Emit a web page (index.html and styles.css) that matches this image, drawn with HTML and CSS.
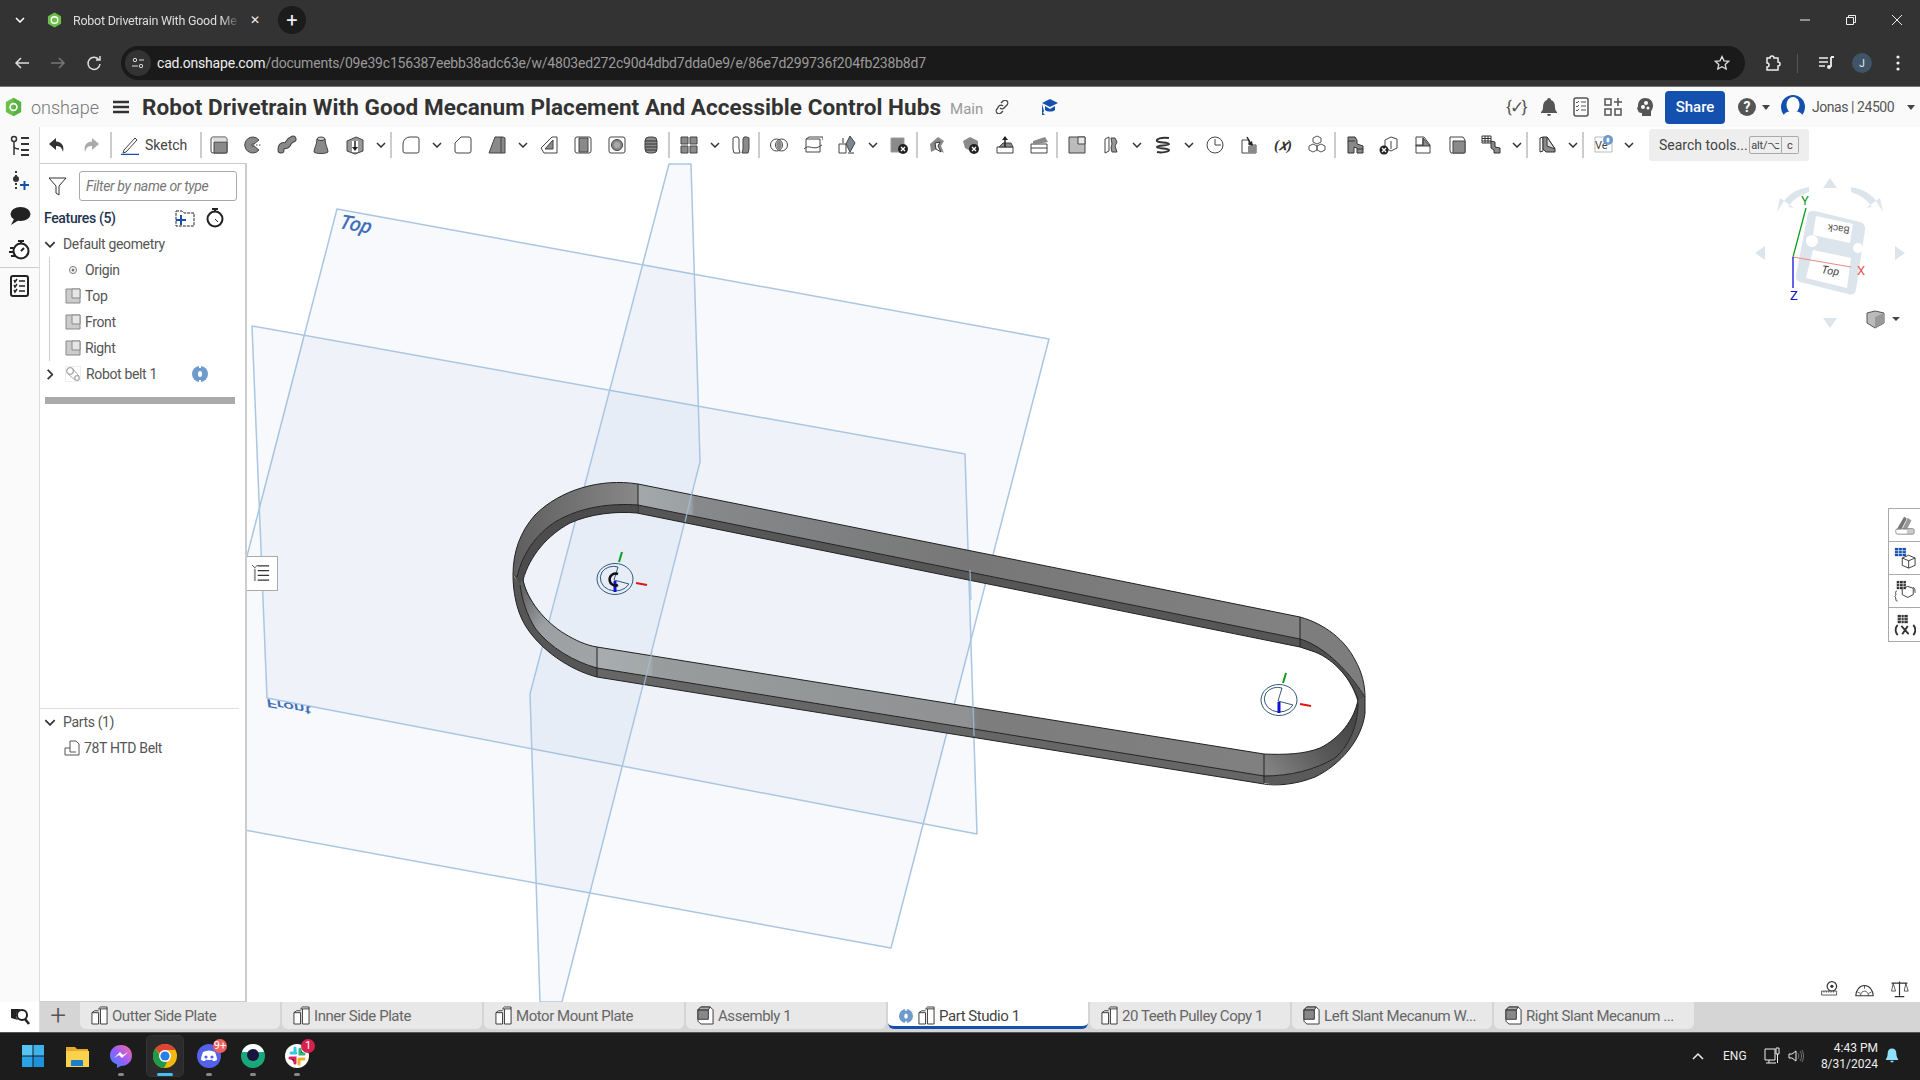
FILE: index.html
```html
<!DOCTYPE html>
<html lang="en">
<head>
<meta charset="utf-8">
<title>Robot Drivetrain With Good Mecanum Placement And Accessible Control Hubs</title>
<link rel="stylesheet" href="styles.css">
</head>
<body>
<svg class="sprite" aria-hidden="true">
  <defs>
    <linearGradient id="bandU" x1="638" x2="1300" y1="0" y2="0" gradientUnits="userSpaceOnUse">
      <stop offset="0" stop-color="#a2a7aa"/><stop offset=".08" stop-color="#9da1a4"/><stop offset=".085" stop-color="#87898b"/><stop offset=".5" stop-color="#777"/><stop offset="1" stop-color="#828282"/>
    </linearGradient>
    <linearGradient id="bandL" x1="597" x2="1264" y1="0" y2="0" gradientUnits="userSpaceOnUse">
      <stop offset="0" stop-color="#a7acae"/><stop offset=".08" stop-color="#a3a8a9"/><stop offset=".085" stop-color="#999c9d"/><stop offset=".56" stop-color="#8f9192"/><stop offset=".57" stop-color="#7d7d7d"/><stop offset="1" stop-color="#808080"/>
    </linearGradient>
    <linearGradient id="arcA" x1="513" x2="638" y1="0" y2="0" gradientUnits="userSpaceOnUse">
      <stop offset="0" stop-color="#5e5e5e"/><stop offset="1" stop-color="#888"/>
    </linearGradient>
    <linearGradient id="arcC" x1="520" x2="597" y1="590" y2="650" gradientUnits="userSpaceOnUse">
      <stop offset="0" stop-color="#5f5f5f"/><stop offset=".4" stop-color="#9c9fa1"/><stop offset="1" stop-color="#a0a4a6"/>
    </linearGradient>
    <linearGradient id="arcF" x1="1358" x2="1264" y1="700" y2="770" gradientUnits="userSpaceOnUse">
      <stop offset="0" stop-color="#3f3f3f"/><stop offset=".5" stop-color="#585858"/><stop offset="1" stop-color="#848484"/>
    </linearGradient>
    <linearGradient id="msgr" x1="0" x2="1" y1="1" y2="0">
      <stop offset="0" stop-color="#2f8cff"/><stop offset=".5" stop-color="#9a5cff"/><stop offset="1" stop-color="#ff6c8e"/>
    </linearGradient>
    <symbol id="i-undo" viewBox="0 0 20 20"><path fill="#333" d="M9 3 2 9l7 6v-4c4-.5 6 1.500 7 6 1.500-6-1-10-7-10.500z"/></symbol>
    <symbol id="i-redo" viewBox="0 0 20 20"><path fill="#aaa" d="m11 3 7 6-7 6v-4c-4-.5-6 1.500-7 6-1.500-6 1-10 7-10.500z"/></symbol>
    <symbol id="i-pencil" viewBox="0 0 20 20"><path fill="none" stroke="#444" d="M4 15 15 3l2 2L6 17l-3 1z"/><path stroke="#1450ad" stroke-width="1.500" d="M1 19.500h18"/></symbol>
    <symbol id="i-extrude" viewBox="0 0 20 20"><rect x="2" y="2" width="16" height="16" rx="2" fill="#fff" stroke="#444"/><path fill="#8a8a8a" stroke="#444" d="M5 7h13v11H5z"/><path fill="#bbb" d="M5 7l-3-5h16v5z" opacity=".5"/></symbol>
    <symbol id="i-revolve" viewBox="0 0 20 20"><path fill="#8a8a8a" stroke="#444" d="M16 5A8 8 0 1 0 16 15L11 11H9V9h2z"/><path stroke="#444" stroke-dasharray="1.500 1.500" d="M10 10h9"/></symbol>
    <symbol id="i-sweep" viewBox="0 0 20 20"><path fill="none" stroke="#444" stroke-width="7" stroke-linecap="round" d="M4 15c0-7 4-3 6-5s1-4 6-6"/><path fill="none" stroke="#8a8a8a" stroke-width="5" stroke-linecap="round" d="M4 15c0-7 4-3 6-5s1-4 6-6"/></symbol>
    <symbol id="i-loft" viewBox="0 0 20 20"><ellipse cx="10" cy="4" rx="4" ry="2" fill="#ccc" stroke="#444"/><path fill="#8a8a8a" stroke="#444" d="M6 4c0 6-3 9-3 13 2 2 12 2 14 0 0-4-3-7-3-13-2 2-6 2-8 0z"/></symbol>
    <symbol id="i-thicken" viewBox="0 0 20 20"><path fill="#999" stroke="#444" d="M2 6 11 2l7 3v11l-8 3-8-3z"/><path fill="#fff" d="M7 6h6v11H7z"/><path stroke="#222" stroke-width="1.500" d="M10 6v7"/><path fill="#222" d="m7 12 3 4 3-4z"/></symbol>
    <symbol id="i-fillet" viewBox="0 0 20 20"><path fill="#fff" stroke="#444" d="M9 2h7a2 2 0 0 1 2 2v12a2 2 0 0 1-2 2H4a2 2 0 0 1-2-2V9a7 7 0 0 1 7-7z"/></symbol>
    <symbol id="i-chamfer" viewBox="0 0 20 20"><path fill="#fff" stroke="#444" d="M8 2h8a2 2 0 0 1 2 2v12a2 2 0 0 1-2 2H4a2 2 0 0 1-2-2V8z"/></symbol>
    <symbol id="i-draft" viewBox="0 0 20 20"><path fill="#8a8a8a" stroke="#444" d="M8 2h8l2 1v15H2z"/><path stroke="#444" d="M14 2v16"/></symbol>
    <symbol id="i-rib" viewBox="0 0 20 20"><path fill="#fff" stroke="#444" d="M2 13 13 2h5v16H5z"/><path fill="#8a8a8a" stroke="#444" d="M6 14 14 5v9z"/></symbol>
    <symbol id="i-shell" viewBox="0 0 20 20"><rect x="2" y="2" width="16" height="16" rx="2" fill="#fff" stroke="#444"/><path fill="#8a8a8a" stroke="#444" d="M6 3h9v14H6z"/></symbol>
    <symbol id="i-hole" viewBox="0 0 20 20"><rect x="2" y="2" width="16" height="16" rx="2" fill="#fff" stroke="#444"/><circle cx="10" cy="10" r="5.500" fill="#8a8a8a" stroke="#444"/><circle cx="10" cy="10" r="3" fill="#aaa"/></symbol>
    <symbol id="i-thread" viewBox="0 0 20 20"><rect x="4" y="2" width="12" height="16" rx="4" fill="#8a8a8a" stroke="#444"/><path stroke="#333" d="M4 6h12M4 9h12M4 12h12M4 15h12"/></symbol>
    <symbol id="i-pattern" viewBox="0 0 20 20"><path fill="#8a8a8a" stroke="#444" d="M2 2h7v7H2zM11 2h7v7h-7zM2 11h7v7H2zM11 11h7v7h-7z"/></symbol>
    <symbol id="i-mirror" viewBox="0 0 20 20"><path fill="#fff" stroke="#444" d="M2 3l2-1h3l1 2v10l1 4H3l-1-4z"/><path fill="#8a8a8a" stroke="#444" d="m18 3-2-1h-3l-1 2v10l-1 4h6l1-4z"/></symbol>
    <symbol id="i-bool" viewBox="0 0 20 20"><circle cx="7.500" cy="10" r="6" fill="#fff" stroke="#444"/><circle cx="12.500" cy="10" r="6" fill="none" stroke="#444"/><path fill="#8a8a8a" d="M10 5a6 6 0 0 1 0 10 6 6 0 0 1 0-10z"/></symbol>
    <symbol id="i-split" viewBox="0 0 20 20"><path fill="#fff" stroke="#444" d="M3 4h14v13H3z"/><path fill="none" stroke="#444" d="M3 4l3-2h14v3M1 14c5-6 9 3 18-4"/></symbol>
    <symbol id="i-transform" viewBox="0 0 20 20"><path fill="#fff" stroke="#444" d="M2 9h7v9H2z"/><path fill="#7a8894" stroke="#444" d="m13 1 5 7-5 9-4-8z"/><path stroke="#333" d="M6 8V3m11 15h-6"/></symbol>
    <symbol id="i-del" viewBox="0 0 20 20"><path fill="#8a8a8a" stroke="#999" d="M2 3h13v14H2z"/><circle cx="14" cy="14" r="5" fill="#222"/><path stroke="#fff" stroke-width="1.300" d="m12 12 4 4m0-4-4 4"/></symbol>
    <symbol id="i-surf" viewBox="0 0 20 20"><path fill="#8a8a8a" d="M3 9 11 2l6 4-3 5 3 7-7-4-6 3z"/><path fill="#fff" stroke="#333" d="m8 8 5-1-2 4 3 6-5-3z"/></symbol>
    <symbol id="i-delsurf" viewBox="0 0 20 20"><path fill="#8a8a8a" d="M2 6 9 2l8 4v7l-6 4-7-4z"/><circle cx="13" cy="14" r="5" fill="#222"/><path stroke="#fff" stroke-width="1.300" d="m11 12 4 4m0-4-4 4"/></symbol>
    <symbol id="i-up" viewBox="0 0 20 20"><path fill="#fff" stroke="#444" d="M2 12h16v6H2z"/><path fill="#8a8a8a" stroke="#444" d="M4 12 8 8h8l2 4z"/><path stroke="#222" stroke-width="1.500" d="M10 12V4"/><path fill="#222" d="M7 5l3-4 3 4z"/></symbol>
    <symbol id="i-boxsurf" viewBox="0 0 20 20"><path fill="#fff" stroke="#444" d="M2 9h16v9H2z"/><path fill="#8a8a8a" d="M4 6 16 2l3 5-15 3z"/><path stroke="#444" d="M2 13h16"/></symbol>
    <symbol id="i-plane" viewBox="0 0 20 20"><path fill="#bbb" stroke="#444" d="M2 2h16v16H2z"/><path fill="#e8e8e8" stroke="#444" d="M11 2h7v7h-7z"/></symbol>
    <symbol id="i-wrap" viewBox="0 0 20 20"><path fill="#fff" stroke="#444" d="M4 4 8 2v14l-4 2z"/><path fill="#999" stroke="#444" d="M10 3h4l2 4-2 4 2 6h-5l-1-4 1-4z"/></symbol>
    <symbol id="i-helix" viewBox="0 0 20 20"><path fill="none" stroke="#333" stroke-width="2" d="M16 3C8 2 3 4 4 6c1 2 12 1 12 3s-12 1-12 3 12 1 12 3-8 3-12 2"/></symbol>
    <symbol id="i-clockf" viewBox="0 0 20 20"><circle cx="10" cy="10" r="8" fill="#fff" stroke="#444"/><path fill="none" stroke="#444" d="M10 4v6h6"/></symbol>
    <symbol id="i-insert" viewBox="0 0 20 20"><path fill="#fff" stroke="#444" d="M3 5h7v5h7v8H3z"/><path fill="#8a8a8a" d="M9 11h8v7H9z"/><path stroke="#222" stroke-width="1.500" d="M8 2l4 7"/><path fill="#222" d="m9 9 5 2-1-5z"/></symbol>
    <symbol id="i-cubes" viewBox="0 0 20 20"><path fill="#fff" stroke="#555" d="m10 1 4 2v4l-4 2-4-2V3zM6 9l4 2v4l-4 2-4-2v-4zM14 9l4 2v4l-4 2-4-2v-4z"/></symbol>
    <symbol id="i-sheet" viewBox="0 0 20 20"><path fill="#8a8a8a" stroke="#333" d="M3 2h7l2 3v4l6 2v7h-6v-5l-3-1v6H3z"/><path stroke="#333" d="M3 6h7M12 14h6"/></symbol>
    <symbol id="i-delcube" viewBox="0 0 20 20"><path fill="#fff" stroke="#444" d="m6 5 6-3 6 2v9l-6 3-6-3z"/><path fill="#ddd" stroke="#444" d="M12 6v8"/><circle cx="5" cy="15" r="4.500" fill="#222"/><path stroke="#fff" stroke-width="1.200" d="m3 13 4 4m0-4-4 4"/></symbol>
    <symbol id="i-flat" viewBox="0 0 20 20"><path fill="#fff" stroke="#444" d="M3 2h8l6 8v8H3z"/><path fill="#8a8a8a" stroke="#444" d="M10 3v8H3v-1h6M10 11h7l-7-8z"/></symbol>
    <symbol id="i-box" viewBox="0 0 20 20"><path fill="#fff" stroke="#444" d="M3 2h13l2 3v12l-1 1H4l-1-2z"/><path fill="#8a8a8a" stroke="#444" d="M6 6h12v12H6z"/></symbol>
    <symbol id="i-table" viewBox="0 0 20 20"><path fill="#fff" stroke="#333" d="M1 1h9v7H1zM1 3.500h9M1 6h9M4 1v7M7 1v7"/><path fill="#8a8a8a" stroke="#333" d="M10 6l4 1v5l5 1v5h-6v-3l-3-2z"/></symbol>
    <symbol id="i-walls" viewBox="0 0 20 20"><path fill="#fff" stroke="#333" d="M3 3l3-1v14l-3 1z"/><path fill="#8a8a8a" stroke="#333" d="M6 2h4l8 12v3H9L6 14z"/><path fill="#ddd" stroke="#333" d="M10 2v9l8 3z"/></symbol>
    <symbol id="i-twin" viewBox="0 0 18 20"><path fill="#fff" stroke="#333" d="M1 7h7v12H1zM1 7l3-2h4M8 3l2-2h7v18h-7V3zM10 3h7"/></symbol>
    <symbol id="i-asm" viewBox="0 0 18 20"><path fill="#fff" stroke="#333" d="M1 4l3-3h10l3 3v15H4l-3-3z"/><path fill="#888" stroke="#333" d="M1 4h11v10H1z"/><path fill="#aaa" stroke="#333" d="M1 4l3-3h10l-2 3z"/></symbol>
    <symbol id="i-tree" viewBox="0 0 22 22"><circle cx="5" cy="4" r="2.500" fill="none" stroke="#333" stroke-width="1.500"/><path fill="none" stroke="#333" stroke-width="1.500" d="M5 7v13M5 11c0 2 3 3 5 3"/><path stroke="#333" stroke-width="2" d="M12 3h8M12 9h8M12 15h8M12 20h8"/></symbol>
    <symbol id="i-addpt" viewBox="0 0 22 22"><path stroke="#333" stroke-width="2" stroke-dasharray="2 2" d="M7 1v20"/><circle cx="7" cy="9" r="3" fill="#333"/><path stroke="#1450ad" stroke-width="2" d="M11 15h9M15.500 11v9"/></symbol>
    <symbol id="i-comment" viewBox="0 0 22 22"><ellipse cx="11.500" cy="9" rx="10" ry="7" fill="#222"/><path fill="#222" d="M5 14 2 20l8-5z"/></symbol>
    <symbol id="i-perf" viewBox="0 0 22 22"><circle cx="12" cy="12" r="7.500" fill="#fff" stroke="#222" stroke-width="2"/><path stroke="#222" stroke-width="2" d="M9 2h6M12 2v3M12 12l3-3M1 9h5M0 13h5M2 17h5"/></symbol>
    <symbol id="i-list" viewBox="0 0 22 22"><rect x="2" y="1" width="17" height="20" rx="2" fill="none" stroke="#222" stroke-width="2"/><path stroke="#222" stroke-width="1.500" d="M10 6h6M10 11h6M10 16h6M5 5l1 2 2-3M5 10l1 2 2-3M5 15l1 2 2-3" fill="none"/></symbol>
    <symbol id="i-funnel" viewBox="0 0 20 20"><path fill="none" stroke="#333" d="M1 2h17l-7 8v9l-3-2v-7z"/></symbol>
    <symbol id="i-folder" viewBox="0 0 20 20"><path fill="none" stroke="#222" stroke-dasharray="3 1" d="M1 3h6l2 2h10v13H1z"/><path stroke="#1450ad" stroke-width="2" d="M1 12h10M6 7v10"/></symbol>
    <symbol id="i-timer" viewBox="0 0 20 20"><circle cx="10" cy="11" r="7.500" fill="none" stroke="#222" stroke-width="2"/><path stroke="#222" stroke-width="2" d="M7 1h6M10 1v3"/><path stroke="#222" d="m10 11 3 3"/></symbol>
    <symbol id="i-origin" viewBox="0 0 10 10"><circle cx="5" cy="5" r="3.500" fill="none" stroke="#777"/><circle cx="5" cy="5" r="1.500" fill="#777"/></symbol>
    <symbol id="i-pl" viewBox="0 0 16 16"><path fill="#ccc" stroke="#888" d="M1 1h14v14H1z"/><path fill="#e6e6e6" stroke="#888" d="M7 1h8v9H7z"/></symbol>
    <symbol id="i-belt" viewBox="0 0 16 16"><rect x=".5" y=".5" width="15" height="15" fill="#fff" stroke="#eee"/><circle cx="5" cy="5" r="3.300" fill="none" stroke="#aaa" stroke-width="1.300"/><circle cx="12" cy="12" r="2.300" fill="none" stroke="#aaa" stroke-width="1.300"/><path stroke="#aaa" d="m8 3 6 7M3 8l7 6"/></symbol>
    <symbol id="i-info" viewBox="0 0 16 16"><circle cx="8" cy="8" r="8" fill="#6f9bcc"/><ellipse cx="8" cy="8" rx="2" ry="3" fill="#fff"/><path stroke="#fff" stroke-width="2" d="M8 0v2m0 12v2"/></symbol>
    <symbol id="i-part" viewBox="0 0 16 16"><path fill="none" stroke="#555" d="M1 15V8h5V1h6l3 3v11zM6 8v4h6"/></symbol>
    <symbol id="i-chev" viewBox="0 0 10 6"><path fill="none" stroke="#333" stroke-width="1.500" d="m1 1 4 4 4-4"/></symbol>
    <symbol id="i-caret" viewBox="0 0 10 6"><path fill="#444" d="M0 0h10L5 6z"/></symbol>
    <symbol id="i-bell" viewBox="0 0 20 20"><path fill="#555" d="M10 1a2 2 0 0 1 2 2c3 1 4 4 4 7 0 3 1 4 2 5v1H2v-1c1-1 2-2 2-5 0-3 1-6 4-7a2 2 0 0 1 2-2zM8 17h4a2 2 0 0 1-4 0z"/></symbol>
    <symbol id="i-check" viewBox="0 0 20 20"><rect x="3" y="1" width="14" height="18" rx="2" fill="none" stroke="#555" stroke-width="1.500"/><path fill="none" stroke="#555" d="M10 5h5M10 9h5M10 13h5M5 5l1 1 2-2M5 9l1 1 2-2M5 13l1 1 2-2"/></symbol>
    <symbol id="i-apps" viewBox="0 0 20 20"><path fill="none" stroke="#555" stroke-width="1.500" d="M2 2h6v6H2zM2 12h6v6H2zM12 12h6v6h-6zM15 1v8M11 5h8"/></symbol>
    <symbol id="i-head" viewBox="0 0 20 20"><path fill="#555" d="M10 1c5 0 8 3 8 8 0 3-2 4-2 6v4H7v-3c-3 0-4-1-4-3l-1-1 1-3c0-5 3-8 7-8z"/><circle cx="11" cy="6" r="2" fill="#fff"/><circle cx="8" cy="10" r="2" fill="#fff"/><circle cx="13" cy="11" r="1.500" fill="#fff"/></symbol>
    <symbol id="i-link" viewBox="0 0 14 14"><path fill="none" stroke="#444" stroke-width="1.300" d="M6 3l2-2c1-1 3-1 4 0s1 3 0 4L9 8C8 9 6 9 5 8M8 6C7 5 5 5 4 6L2 9c-1 1-1 3 0 4s3 1 4 0l2-2"/></symbol>
    <symbol id="i-cap" viewBox="0 0 18 18"><path fill="#1450ad" d="M9 1 1 5l8 4 8-4zM4 8v4c2 2 8 2 10 0V8l-5 3zM1 6v11h3l-2-2 1-2z"/></symbol>
    <symbol id="i-user" viewBox="0 0 24 24"><circle cx="12" cy="12" r="12" fill="#1450ad"/><ellipse cx="12" cy="10" rx="6.500" ry="8" fill="#fff"/><path fill="#fff" d="M2 24c0-6 4-8 10-8s10 2 10 8z"/></symbol>
    <symbol id="i-eye" viewBox="0 0 20 20"><path fill="#222" d="M1 2h10l-3 2a6 6 0 0 0 0 9L1 11z"/><circle cx="12" cy="8" r="5" fill="none" stroke="#222" stroke-width="2"/><path stroke="#222" stroke-width="2.500" d="m15 12 4 5"/></symbol>
    <symbol id="i-paint" viewBox="0 0 24 24"><path fill="#777" d="M3 17 11 3l3 2-6 12z"/><path fill="#999" d="M9 17 15 4l4 3-5 10z"/><path fill="#ccc" d="M14 16h8v6h-8z"/><rect x="2" y="16" width="20" height="6" rx="2" fill="none" stroke="#888"/></symbol>
    <symbol id="i-cubet" viewBox="0 0 24 24"><path fill="none" stroke="#333" d="m9 12 7-3 7 3v8l-7 3-7-3zM9 12l7 3 7-3M16 15v8"/><path fill="#1450ad" d="M1 1h12v9H1z"/><path stroke="#fff" stroke-width=".7" d="M1 4h12M1 7h12M5 1v9M9 1v9"/></symbol>
    <symbol id="i-cubev" viewBox="0 0 24 24"><path fill="none" stroke="#333" d="m9 9 6-2 6 2v7l-6 3-6-3zM3 12c-2 0-1 3-1 4s-1 2-1 2 1 1 1 3 1 2 2 2M21 8c2 1 2 4 2 6"/><path fill="#333" d="M3 1h10v9H3z"/><path stroke="#fff" stroke-width=".7" d="M3 4h10M3 7h10M6 1v9M10 1v9"/></symbol>
    <symbol id="i-cubex" viewBox="0 0 24 24"><path fill="#333" d="M4 1h11v9H4z"/><path stroke="#fff" stroke-width=".7" d="M4 4h11M4 7h11M8 1v9M11 1v9"/><path fill="none" stroke="#333" stroke-width="2" d="M4 12c-3 3-3 8 0 11M21 12c3 3 3 8 0 11M8 13l8 9M15 13l-6 9"/></symbol>
    <symbol id="i-tape" viewBox="0 0 24 24"><circle cx="15" cy="8" r="6" fill="#fff" stroke="#333" stroke-width="1.500"/><circle cx="15" cy="8" r="2" fill="#333"/><path fill="#fff" stroke="#333" d="M2 14h19v5H2z"/><path stroke="#333" d="M5 14v2M8 14v2M11 14v2M14 14v2M17 14v2"/></symbol>
    <symbol id="i-protractor" viewBox="0 0 24 24"><path fill="#fff" stroke="#333" stroke-width="1.300" d="M1 20a11 13 0 0 1 22 0z"/><path fill="none" stroke="#333" d="M7 20a5 6 0 0 1 10 0M3 15l4 2M21 15l-4 2M12 7v4"/></symbol>
    <symbol id="i-scale" viewBox="0 0 24 24"><path stroke="#333" stroke-width="1.500" d="M12 2v18M2 4h20M6 21h12"/><path fill="none" stroke="#333" d="M4 4 2 14h5zM20 4l-2 10h5z"/></symbol>
    <symbol id="i-outline" viewBox="0 0 20 20"><path fill="#fff" stroke="#bbb" d="M2 2h17v15H2z"/><text x="2" y="14" font-family="Roboto,sans-serif" font-size="11" fill="#444">Ve</text><circle cx="15" cy="5" r="5" fill="#6f9bcc"/><ellipse cx="15" cy="5" rx="1.500" ry="2.500" fill="#fff"/></symbol>
    <g id="connector">
      <ellipse cx="615" cy="579" rx="18" ry="15.500" fill="none" stroke="#33597a"/>
      <path d="M614 580 618 567A14 13 0 0 0 602 572 14 12 0 0 0 629 584Z" fill="none" stroke="#33597a"/>
      <path d="M615 581v11" stroke="#1010d8" stroke-width="3"/>
      <path d="m619 562 3-10" stroke="#0d9d1d" stroke-width="2"/>
      <path d="m636 583 11 2" stroke="#e01515" stroke-width="2"/>
    </g>
    <symbol id="t-win" viewBox="0 0 24 24"><path fill="#56c5f5" d="M1 1h10.500v10.500H1z"/><path fill="#3cb2ee" d="M12.500 1H23v10.500H12.500z"/><path fill="#2aa2e6" d="M1 12.500h10.500V23H1z"/><path fill="#1e91dd" d="M12.500 12.500H23V23H12.500z"/></symbol>
    <symbol id="t-folder" viewBox="0 0 24 24"><path fill="#e8a92a" d="M1 3h9l2 2h11v3H1z"/><path fill="#fad24e" d="M1 7h23v16H1z"/><path fill="#1a7fc8" d="M7 16h10a1 1 0 0 1 1 1v5H6v-5a1 1 0 0 1 1-1z"/></symbol>
    <symbol id="t-msgr" viewBox="0 0 24 24"><path fill="url(#msgr)" d="M12 1c6.500 0 11 4.500 11 10.500S18.500 22 12 22l-4 2v-3.500C4 19 1 16 1 11.500 1 5.500 5.500 1 12 1z"/><path fill="#fff" d="m5 14 6-6 3 3 5-3-6 6-3-3z"/></symbol>
    <symbol id="t-chrome" viewBox="0 0 24 24"><circle cx="12" cy="12" r="12" fill="#f2b80f"/><path fill="#dd4436" d="M12 0a12 12 0 0 1 10.400 6H12a6 6 0 0 0-5.500 3.500L2.400 4.800A12 12 0 0 1 12 0z"/><path fill="#1e9a4a" d="M2.400 4.800 8 13a6 6 0 0 0 6 5l-3 6A12 12 0 0 1 2.400 4.800z"/><circle cx="12" cy="12" r="6" fill="#fff"/><circle cx="12" cy="12" r="4.600" fill="#2a7ee8"/></symbol>
    <symbol id="t-discord" viewBox="0 0 24 24"><circle cx="12" cy="12" r="12" fill="#5462ea"/><path fill="#fff" d="M6 8c4-2 8-2 12 0 1 3 2 5 2 8-2 1-3 1-4 1l-1-1.500c-2 .7-4 .7-6 0L8 17c-1 0-2 0-4-1 0-3 1-5 2-8z"/><circle cx="9" cy="13" r="1.600" fill="#5462ea"/><circle cx="15" cy="13" r="1.600" fill="#5462ea"/></symbol>
    <symbol id="t-eye" viewBox="0 0 24 24"><circle cx="12" cy="12" r="12" fill="#18a879"/><path fill="#fff" d="M12 0a12 12 0 0 1 11 8H1A12 12 0 0 1 12 0z"/><circle cx="12" cy="11" r="6" fill="#1a1440"/></symbol>
    <symbol id="t-slack" viewBox="0 0 24 24"><circle cx="12" cy="12" r="12" fill="#fff"/><path stroke="#36c5f0" stroke-width="3" stroke-linecap="round" d="M6 9h5M10 4v5"/><path stroke="#2eb67d" stroke-width="3" stroke-linecap="round" d="M15 5v5h4"/><path stroke="#ecb22e" stroke-width="3" stroke-linecap="round" d="M14 15h5M14 15v5"/><path stroke="#e01e5a" stroke-width="3" stroke-linecap="round" d="M5 14h5v5"/></symbol>
    <symbol id="n-back" viewBox="0 0 16 16"><path fill="none" stroke="#ddd" stroke-width="1.500" d="M15 8H2M7 3 2 8l5 5"/></symbol>
  </defs>
</svg>

<header class="browser-tabs">
  <svg class="b-chev"><use href="#i-chev"/></svg>
  <div class="b-tab">
    <svg class="fav" viewBox="0 0 16 16"><path fill="#6cc04a" d="m8 0 7 4v8l-7 4-7-4V4z"/><circle cx="8" cy="8" r="3.500" fill="none" stroke="#fff" stroke-width="1.500"/></svg>
    <span class="b-title">Robot Drivetrain With Good Me</span>
    <span class="b-close">✕</span>
  </div>
  <span class="b-new">+</span>
  <div class="win">
    <svg class="w-ic" viewBox="0 0 12 12"><path stroke="#eee" d="M1 6h10"/></svg>
    <svg class="w-ic" viewBox="0 0 12 12"><path fill="none" stroke="#eee" d="M1.500 3.500h7v7h-7zM3.500 3.500v-2h7v7h-2"/></svg>
    <svg class="w-ic" viewBox="0 0 12 12"><path stroke="#eee" d="m1 1 10 10M11 1 1 11"/></svg>
  </div>
</header>
<nav class="browser-url">
  <svg class="n-ic"><use href="#n-back"/></svg>
  <svg class="n-ic" viewBox="0 0 16 16"><path fill="none" stroke="#777" stroke-width="1.500" d="M1 8h13M9 3l5 5-5 5"/></svg>
  <svg class="n-ic" viewBox="0 0 16 16"><path fill="none" stroke="#ddd" stroke-width="1.500" d="M13 5a6 6 0 1 0 1 4M14 1v4h-4"/></svg>
  <div class="omni">
    <span class="site"><svg class="site-ic" viewBox="0 0 14 14"><circle cx="4" cy="4" r="1.700" fill="none" stroke="#ddd"/><circle cx="10" cy="10" r="1.700" fill="none" stroke="#ddd"/><path stroke="#ddd" d="M8 4h5M1 10h6"/></svg></span>
    <span class="url"><b>cad.onshape.com</b>/documents/09e39c156387eebb38adc63e/w/4803ed272c90d4dbd7dda0e9/e/86e7d299736f204fb238b8d7</span>
    <svg class="star" viewBox="0 0 16 16"><path fill="none" stroke="#ddd" stroke-width="1.300" d="m8 1.500 2 4.300 4.700.5-3.500 3.200 1 4.600L8 11.800l-4.200 2.300 1-4.600L1.300 6.300 6 5.800z"/></svg>
  </div>
  <svg class="ext" viewBox="0 0 18 18"><path fill="none" stroke="#eee" stroke-width="1.500" d="M3 4h3a2 2 0 0 1 4 0h4v4a2 2 0 0 1 0 4v4H3v-3a2 2 0 0 0 0-4z"/></svg>
  <span class="n-sep"></span>
  <svg class="media" viewBox="0 0 18 18"><path stroke="#eee" stroke-width="1.500" d="M2 4h9M2 8h9M2 12h6"/><path fill="none" stroke="#eee" stroke-width="1.800" d="M14 3v10M14 3h3"/><circle cx="12" cy="13" r="2" fill="#eee"/></svg>
  <span class="prof">J</span>
  <svg class="dots" viewBox="0 0 4 16"><circle cx="2" cy="2" r="1.600" fill="#eee"/><circle cx="2" cy="8" r="1.600" fill="#eee"/><circle cx="2" cy="14" r="1.600" fill="#eee"/></svg>
</nav>

<div class="app-head">
  <svg class="logo" viewBox="0 0 20 22"><path fill="#6cc04a" d="m10 0 9 5v12l-9 5-9-5V5z"/><path fill="#3a9a3a" d="m10 0 9 5v12l-9 5z" opacity=".4"/><circle cx="10" cy="11" r="4" fill="none" stroke="#fff" stroke-width="2"/></svg>
  <span class="brand">onshape</span>
  <svg class="burger" viewBox="0 0 16 14"><path stroke="#333" stroke-width="2.400" d="M0 2h16M0 7h16M0 12h16"/></svg>
  <h1 class="doc-title">Robot Drivetrain With Good Mecanum Placement And Accessible Control Hubs</h1>
  <span class="branch">Main</span>
  <svg class="link"><use href="#i-link"/></svg>
  <svg class="cap"><use href="#i-cap"/></svg>
  <div class="head-right">
    <span class="braces">{✓}</span>
    <svg class="hi"><use href="#i-bell"/></svg>
    <svg class="hi"><use href="#i-check"/></svg>
    <svg class="hi"><use href="#i-apps"/></svg>
    <svg class="hi"><use href="#i-head"/></svg>
    <button class="share">Share</button>
    <span class="help">?</span>
    <svg class="caret"><use href="#i-caret"/></svg>
    <svg class="user"><use href="#i-user"/></svg>
    <span class="uname">Jonas | 24500</span>
    <svg class="caret"><use href="#i-caret"/></svg>
  </div>
</div>

<div class="main">
  <aside class="rail">
    <div class="r-cell"><svg class="r-ic"><use href="#i-tree"/></svg></div>
    <div class="r-cell"><svg class="r-ic"><use href="#i-addpt"/></svg></div>
    <div class="r-cell"><svg class="r-ic"><use href="#i-comment"/></svg></div>
    <div class="r-cell r-last"><svg class="r-ic"><use href="#i-perf"/></svg></div>
    <div class="r-cell"><svg class="r-ic"><use href="#i-list"/></svg></div>
    <div class="r-foot"><svg class="r-eye"><use href="#i-eye"/></svg></div>
  </aside>
  <div class="content">
    <div class="toolbar">
      <span class="tb"><svg class="ic"><use href="#i-undo"/></svg></span>
      <span class="tb"><svg class="ic"><use href="#i-redo"/></svg></span>
      <span class="sep first"></span>
      <span class="sketch"><svg class="ic"><use href="#i-pencil"/></svg><span>Sketch</span></span>
      <span class="sep tight"></span>
      <span class="tb"><svg class="ic"><use href="#i-extrude"/></svg></span>
      <span class="tb"><svg class="ic"><use href="#i-revolve"/></svg></span>
      <span class="tb"><svg class="ic"><use href="#i-sweep"/></svg></span>
      <span class="tb"><svg class="ic"><use href="#i-loft"/></svg></span>
      <span class="tb"><svg class="ic"><use href="#i-thicken"/></svg></span>
      <span class="cv"><svg class="chev"><use href="#i-chev"/></svg></span>
      <span class="sep"></span>
      <span class="tb"><svg class="ic"><use href="#i-fillet"/></svg></span>
      <span class="cv"><svg class="chev"><use href="#i-chev"/></svg></span>
      <span class="tb"><svg class="ic"><use href="#i-chamfer"/></svg></span>
      <span class="tb"><svg class="ic"><use href="#i-draft"/></svg></span>
      <span class="cv"><svg class="chev"><use href="#i-chev"/></svg></span>
      <span class="tb"><svg class="ic"><use href="#i-rib"/></svg></span>
      <span class="tb"><svg class="ic"><use href="#i-shell"/></svg></span>
      <span class="tb"><svg class="ic"><use href="#i-hole"/></svg></span>
      <span class="tb"><svg class="ic"><use href="#i-thread"/></svg></span>
      <span class="sep"></span>
      <span class="tb"><svg class="ic"><use href="#i-pattern"/></svg></span>
      <span class="cv"><svg class="chev"><use href="#i-chev"/></svg></span>
      <span class="tb"><svg class="ic"><use href="#i-mirror"/></svg></span>
      <span class="sep"></span>
      <span class="tb"><svg class="ic"><use href="#i-bool"/></svg></span>
      <span class="tb"><svg class="ic"><use href="#i-split"/></svg></span>
      <span class="tb"><svg class="ic"><use href="#i-transform"/></svg></span>
      <span class="cv"><svg class="chev"><use href="#i-chev"/></svg></span>
      <span class="tb"><svg class="ic"><use href="#i-del"/></svg></span>
      <span class="sep"></span>
      <span class="tb"><svg class="ic"><use href="#i-surf"/></svg></span>
      <span class="tb"><svg class="ic"><use href="#i-delsurf"/></svg></span>
      <span class="tb"><svg class="ic"><use href="#i-up"/></svg></span>
      <span class="tb"><svg class="ic"><use href="#i-boxsurf"/></svg></span>
      <span class="sep"></span>
      <span class="tb"><svg class="ic"><use href="#i-plane"/></svg></span>
      <span class="tb"><svg class="ic"><use href="#i-wrap"/></svg></span>
      <span class="cv"><svg class="chev"><use href="#i-chev"/></svg></span>
      <span class="tb"><svg class="ic"><use href="#i-helix"/></svg></span>
      <span class="cv"><svg class="chev"><use href="#i-chev"/></svg></span>
      <span class="tb"><svg class="ic"><use href="#i-clockf"/></svg></span>
      <span class="tb"><svg class="ic"><use href="#i-insert"/></svg></span>
      <span class="tb var">(𝑥)</span>
      <span class="tb"><svg class="ic"><use href="#i-cubes"/></svg></span>
      <span class="sep"></span>
      <span class="tb"><svg class="ic"><use href="#i-sheet"/></svg></span>
      <span class="tb"><svg class="ic"><use href="#i-delcube"/></svg></span>
      <span class="tb"><svg class="ic"><use href="#i-flat"/></svg></span>
      <span class="tb"><svg class="ic"><use href="#i-box"/></svg></span>
      <span class="tb"><svg class="ic"><use href="#i-table"/></svg></span>
      <span class="cv"><svg class="chev"><use href="#i-chev"/></svg></span>
      <span class="sep"></span>
      <span class="tb"><svg class="ic"><use href="#i-walls"/></svg></span>
      <span class="cv"><svg class="chev"><use href="#i-chev"/></svg></span>
      <span class="sep"></span>
      <span class="tb"><svg class="ic"><use href="#i-outline"/></svg></span>
      <span class="cv"><svg class="chev"><use href="#i-chev"/></svg></span>
      <div class="search"><span>Search tools...</span><kbd class="k1">alt/⌥</kbd><kbd class="k2">c</kbd></div>
    </div>

    <div class="workspace">
      <section class="panel">
        <div class="filter">
          <svg class="funnel"><use href="#i-funnel"/></svg>
          <div class="f-input">Filter by name or type</div>
        </div>
        <div class="f-head">
          <span class="f-count">Features (5)</span>
          <svg class="f-ic"><use href="#i-folder"/></svg>
          <svg class="f-ic"><use href="#i-timer"/></svg>
        </div>
        <div class="row"><svg class="arrow"><use href="#i-chev"/></svg><span>Default geometry</span></div>
        <div class="tree">
          <div class="row sub"><svg class="ri small"><use href="#i-origin"/></svg><span>Origin</span></div>
          <div class="row sub"><svg class="ri"><use href="#i-pl"/></svg><span>Top</span></div>
          <div class="row sub"><svg class="ri"><use href="#i-pl"/></svg><span>Front</span></div>
          <div class="row sub"><svg class="ri"><use href="#i-pl"/></svg><span>Right</span></div>
        </div>
        <div class="row belt"><svg class="arrow right"><use href="#i-chev"/></svg><svg class="ri"><use href="#i-belt"/></svg><span>Robot belt 1</span><svg class="info"><use href="#i-info"/></svg></div>
        <div class="rollback"></div>
        <div class="parts">
          <div class="row"><svg class="arrow"><use href="#i-chev"/></svg><span>Parts (1)</span></div>
          <div class="row sub"><svg class="ri"><use href="#i-part"/></svg><span>78T HTD Belt</span></div>
        </div>
      </section>
      <div class="viewport">
        <svg class="scene" viewBox="247 163 1673 839">
          <polygon class="plane" points="337,209 1049,339 891,948 179,818"/>
          <polygon class="plane" points="252,326 965,454 977,834 267,698"/>
          <polygon class="plane" points="669,164 691,164 700,462 562,1002 540,1002 530,694"/>
          <text class="pl-text" transform="translate(338,228) rotate(10) skewX(-8)">Top</text>
          <text class="pl-text" transform="translate(267,699) rotate(10) scale(1,-.55)">Front</text>

          <path fill="url(#arcA)" d="M638 484C600 478 560 490 535 515 520 532 513 552 513 575L517 577C522 555 535 535 555 522 580 507 610 503 638 505Z"/>
          <path fill="#4c4c4c" d="M638 505C610 503 580 507 555 522 535 535 522 555 517 577L523 580C530 555 548 535 570 523 590 514 615 511 637 513Z"/>
          <path fill="#4c4c4c" d="M513 574 517 576 524 579 521 588Z"/>
          <path fill="url(#arcC)" d="M523 578C527 600 545 622 565 634 575 640 585 645 597 647L597 668C575 662 550 648 535 628 527 615 522 600 520 585Z"/>
          <path fill="#565656" d="M520 585C522 600 527 615 535 628 550 648 575 662 597 668L597 677C570 670 540 650 525 625 516 610 513 590 513 575Z"/>
          <path fill="url(#bandU)" d="M638 484 1300 617V639L638 505Z"/>
          <path fill="#565656" d="M638 505 1300 639V647L637 513Z"/>
          <path fill="url(#bandL)" d="M597 647 1264 754V776L597 668Z"/>
          <path fill="#666" d="M597 668 1264 776V784L597 677Z"/>
          <path fill="#7d7d7d" d="M1300 617C1325 624 1345 640 1355 660 1362 672 1365 685 1365 697 1355 680 1340 662 1320 650 1312 645 1306 641 1300 639Z"/>
          <path fill="#4f4f4f" d="M1300 639C1320 645 1345 665 1365 697L1358 703C1352 680 1335 660 1315 652L1300 647Z"/>
          <path fill="url(#arcF)" d="M1358 700C1354 720 1340 738 1320 748 1305 754 1285 755 1264 754V776C1290 776 1315 770 1335 758 1350 745 1358 725 1358 703Z"/>
          <path fill="#5a5a5a" d="M1358 700 1365 697V713C1362 740 1340 765 1315 777 1295 785 1275 786 1264 783V776C1290 776 1315 770 1335 758 1350 745 1358 725 1358 703Z"/>
          <g class="edges">
            <path d="M638 484C600 478 560 490 535 515 520 532 513 552 513 575 513 590 516 610 525 625 540 650 570 670 597 677L1264 784C1275 786 1295 785 1315 777 1340 765 1362 740 1365 713V697C1365 685 1362 672 1355 660 1345 640 1325 624 1300 617Z"/>
            <path d="M638 505C610 503 580 507 555 522 535 535 522 555 517 577M638 505 1300 639C1320 645 1345 665 1365 697"/>
            <path d="M637 513C615 511 590 514 570 523 548 535 530 555 523 580 527 600 545 622 565 634 575 640 585 645 597 647L1264 754C1285 755 1305 754 1320 748 1340 738 1354 720 1358 700 1352 680 1335 660 1315 652L1300 647 637 513"/>
            <path d="M520 585C522 600 527 615 535 628 550 648 575 662 597 668L1264 776C1290 776 1315 770 1335 758 1350 745 1358 725 1358 703"/>
            <path d="M638 484V513M1300 617V647M597 647V677M1264 754V783"/>
          </g>
          <path class="pl-over" d="M692 492 685 522M652 652 644 685M970 570 971 600M973 706 974 736"/>

          <use href="#connector"/>
          <use href="#connector" transform="translate(664,121)"/>
          <path class="c-hub" d="M618 574A6 6 0 1 0 618 585"/>

          <g class="cube-nav">
            <path class="nav" d="M1830 178 1837 188H1823ZM1755 253 1765 246V260ZM1905 253 1895 246V260ZM1830 328 1823 318H1837Z"/>
            <path class="nav" d="M1777 212 1780 198 1794 208 1788 207Q1794 197 1809 192V187Q1790 190 1782 204ZM1883 212 1880 198 1866 208 1872 207Q1866 197 1851 192V187Q1870 190 1878 204Z"/>
            <path class="cube" d="M1808 213Q1810 210 1815 211L1860 222Q1866 224 1865 230L1856 290Q1854 296 1848 294L1800 282Q1795 280 1796 275Z"/>
            <path class="cube-f" d="M1816 216 1853 224 1850 243 1813 235ZM1813 250 1851 258 1847 288 1806 278Z"/>
            <circle class="cube-f" cx="1812" cy="241" r="6"/>
            <circle class="cube-f" cx="1858" cy="248" r="5"/>
            <text class="cube-t" transform="translate(1850,227) rotate(188)">Back</text>
            <text class="cube-i" transform="translate(1821,273) rotate(9)">Top</text>
            <path stroke="#0d9d1d" stroke-width="1.300" d="M1793 257 1806 208"/>
            <path stroke="#e88" stroke-width="1.200" d="M1793 257 1851 267"/>
            <path stroke="#1010d8" stroke-width="1.300" d="M1793 257V288"/>
            <text class="ax axy" x="1801" y="205">Y</text>
            <text class="ax axx" x="1857" y="275">X</text>
            <text class="ax axz" x="1790" y="300">Z</text>
            <path fill="#bbb" stroke="#555" d="M1867 313 1875 311 1884 313V323L1875 328 1867 323Z"/>
            <path fill="#999" d="M1875 317 1884 313V323L1875 328Z"/>
            <path fill="#444" d="M1892 317H1900L1896 321Z"/>
          </g>
        </svg>
        <button class="toggle" aria-label="Toggle list"><svg class="t-ic" viewBox="0 0 20 20"><path stroke="#333" stroke-width="1.300" d="M6 2h12M6 7h12M6 12h12M6 17h12"/><path fill="#999" d="M2 5h2v13H2z"/><path fill="none" stroke="#444" d="m0 1 3 3 3-3"/></svg></button>
        <div class="side">
          <span class="s-cell"><svg class="s-ic"><use href="#i-paint"/></svg></span>
          <span class="s-cell"><svg class="s-ic"><use href="#i-cubet"/></svg></span>
          <span class="s-cell"><svg class="s-ic"><use href="#i-cubev"/></svg></span>
          <span class="s-cell"><svg class="s-ic"><use href="#i-cubex"/></svg></span>
        </div>
        <div class="measure">
          <svg class="m-ic"><use href="#i-tape"/></svg>
          <svg class="m-ic"><use href="#i-protractor"/></svg>
          <svg class="m-ic"><use href="#i-scale"/></svg>
        </div>
      </div>
    </div>

    <div class="doc-tabs">
      <span class="add">+</span>
      <div class="tab"><svg class="d-ic"><use href="#i-twin"/></svg><span>Outter Side Plate</span></div>
      <div class="tab"><svg class="d-ic"><use href="#i-twin"/></svg><span>Inner Side Plate</span></div>
      <div class="tab"><svg class="d-ic"><use href="#i-twin"/></svg><span>Motor Mount Plate</span></div>
      <div class="tab"><svg class="d-ic"><use href="#i-asm"/></svg><span>Assembly 1</span></div>
      <div class="tab active"><svg class="d-info"><use href="#i-info"/></svg><svg class="d-ic"><use href="#i-twin"/></svg><span>Part Studio 1</span></div>
      <div class="tab"><svg class="d-ic"><use href="#i-twin"/></svg><span>20 Teeth Pulley Copy 1</span></div>
      <div class="tab"><svg class="d-ic"><use href="#i-asm"/></svg><span>Left Slant Mecanum W...</span></div>
      <div class="tab"><svg class="d-ic"><use href="#i-asm"/></svg><span>Right Slant Mecanum ...</span></div>
    </div>
  </div>
</div>

<footer class="taskbar">
  <span class="tk"><svg class="tk-ic"><use href="#t-win"/></svg></span>
  <span class="tk"><svg class="tk-ic"><use href="#t-folder"/></svg></span>
  <span class="tk pip"><svg class="tk-ic"><use href="#t-msgr"/></svg></span>
  <span class="tk pip on"><svg class="tk-ic"><use href="#t-chrome"/></svg></span>
  <span class="tk pip"><svg class="tk-ic"><use href="#t-discord"/></svg><i class="badge soft">9+</i></span>
  <span class="tk pip"><svg class="tk-ic"><use href="#t-eye"/></svg></span>
  <span class="tk pip"><svg class="tk-ic"><use href="#t-slack"/></svg><i class="badge">1</i></span>
  <div class="tray">
    <svg class="tr-up" viewBox="0 0 12 8"><path fill="none" stroke="#eee" stroke-width="1.500" d="m1 7 5-5 5 5"/></svg>
    <span class="eng">ENG</span>
    <svg class="tr-ic" viewBox="0 0 18 18"><path fill="none" stroke="#eee" d="M1 2h10v11H1zM5 13v3M2 16h10M12 1h3v6h-3zM13.500 7v9"/></svg>
    <svg class="tr-ic" viewBox="0 0 18 18"><path fill="none" stroke="#eee" d="M2 7h3l4-3v10l-4-3H2z"/><path fill="none" stroke="#777" d="M11 6c1 2 1 4 0 6M13 4c2 3 2 7 0 10M15 3c2 4 2 8 0 12"/></svg>
    <div class="clock"><span>4:43 PM</span><span>8/31/2024</span></div>
    <svg class="tr-bell" viewBox="0 0 16 18"><path fill="#8fe0ff" d="M8 1c3 0 5 2 5 6 0 3 1 5 2 6v1H1v-1c1-1 2-3 2-6 0-4 2-6 5-6zM6 15h4a2 2 0 0 1-4 0z"/></svg>
  </div>
</footer>
</body>
</html>
```
FILE: styles.css
```css
* { box-sizing: border-box; }
html, body { margin: 0; padding: 0; }
body {
  width: 1920px;
  height: 1080px;
  overflow: hidden;
  display: flex;
  flex-direction: column;
  font-family: Roboto, "Noto Sans", sans-serif;
  background: #fff;
  color: #444;
}
.sprite { position: absolute; width: 0; height: 0; overflow: hidden; }

/* browser chrome */
.browser-tabs { height: 46px; flex: none; background: #333; display: flex; align-items: center; padding-bottom: 6px; color: #eee; }
.b-chev { width: 10px; height: 6px; margin-left: 15px; filter: invert(1) brightness(2); }
.b-tab { display: flex; align-items: center; margin-left: 22px; width: 231px; }
.fav { width: 15px; height: 16px; flex: none; }
.b-title { margin-left: 11px; width: 168px; white-space: nowrap; overflow: hidden; font-size: 12.500px; letter-spacing: -.25px; color: #ddd; -webkit-mask-image: linear-gradient(90deg, #000 88%, transparent); mask-image: linear-gradient(90deg, #000 88%, transparent); }
.b-close { margin-left: 9px; font-size: 12px; color: #eee; }
.b-new { width: 28px; height: 28px; border-radius: 50%; background: #1c1c1c; display: flex; align-items: center; justify-content: center; font-size: 20px; margin-left: 0; color: #eee; }
.win { margin-left: auto; display: flex; gap: 34px; padding-right: 17px; }
.w-ic { width: 12px; height: 12px; }

.browser-url { height: 41px; flex: none; background: #333; border-bottom: 1px solid #777; display: flex; align-items: center; padding-bottom: 6px; }
.n-ic { width: 16px; height: 16px; margin-left: 20px; flex: none; }
.n-ic:first-child { margin-left: 14px; }
.omni { margin-left: 19px; width: 1624px; height: 34px; border-radius: 17px; background: #1a1a1a; display: flex; align-items: center; padding-left: 4px; }
.site { width: 26px; height: 26px; border-radius: 50%; background: #333; display: flex; align-items: center; justify-content: center; flex: none; }
.site-ic { width: 14px; height: 14px; }
.url { margin-left: 6px; font-size: 14px; letter-spacing: -.2px; color: #9a9a9a; white-space: nowrap; }
.url b { font-weight: 400; color: #eee; }
.star { width: 16px; height: 16px; margin-left: auto; margin-right: 15px; }
.ext { width: 18px; height: 18px; margin-left: 19px; flex: none; }
.n-sep { width: 1px; height: 19px; background: #555; margin-left: 15px; }
.media { width: 18px; height: 18px; margin-left: 19px; flex: none; }
.prof { width: 20px; height: 20px; border-radius: 50%; background: #3f5567; margin-left: 17px; display: flex; align-items: center; justify-content: center; font-size: 10px; color: #eee; flex: none; }
.dots { width: 4px; height: 16px; margin-left: 24px; flex: none; }

/* app header */
.app-head { height: 40px; flex: none; background: #fafafa; display: flex; align-items: center; }
.logo { width: 17px; height: 20px; margin-left: 5px; flex: none; }
.brand { margin-left: 9px; font-size: 18px; font-weight: 300; color: #777; width: 68px; }
.burger { width: 16px; height: 14px; margin-left: 14px; flex: none; }
.doc-title { margin: 0 0 0 13px; font-size: 22.500px; font-weight: 700; color: #333; white-space: nowrap; letter-spacing: .07px; }
.branch { margin-left: 9px; font-size: 15px; color: #999; padding-top: 3px; }
.link { width: 14px; height: 14px; margin-left: 12px; flex: none; }
.cap { width: 18px; height: 18px; margin-left: 32px; flex: none; }
.head-right { margin-left: auto; display: flex; align-items: center; padding-right: 5px; }
.braces { font-size: 17px; color: #555; width: 22px; letter-spacing: -2px; margin-right: 11px; }
.hi { width: 20px; height: 20px; margin-right: 12px; flex: none; }
.hi:nth-of-type(4) { margin-right: 10px; }
.share { width: 60px; height: 33px; background: #1450ad; color: #fff; border: 0; border-radius: 4px; font: 500 15px Roboto, sans-serif; padding: 0; }
.help { width: 18px; height: 18px; border-radius: 50%; background: #555; color: #fff; font-size: 14px; font-weight: 700; display: flex; align-items: center; justify-content: center; margin-left: 13px; margin-right: -2px; }
.caret { width: 8px; height: 5px; margin-left: 6px; flex: none; }
.help + .caret { margin-left: 8px; }
.user { width: 24px; height: 24px; margin-left: 11px; flex: none; }
.uname { margin-left: 7px; font-size: 14px; letter-spacing: -.45px; color: #555; width: 89px; white-space: nowrap; }

/* layout */
.main { flex: 1; min-height: 0; display: flex; }
.rail { width: 40px; flex: none; background: #fafafa; display: flex; flex-direction: column; padding-top: 1px; border-right: 1px solid #ddd; }
.r-cell { height: 35px; display: flex; align-items: center; justify-content: center; }
.r-last { border-bottom: 1px solid #ccc; }
.r-ic { width: 22px; height: 22px; }
.r-foot { margin-top: auto; height: 30px; display: flex; align-items: center; justify-content: center; background: #fff; }
.r-eye { width: 20px; height: 20px; }
.content { flex: 1; min-width: 0; display: flex; flex-direction: column; }

/* toolbar */
.toolbar { height: 36px; flex: none; background: #fff; display: flex; align-items: center; }
.tb { width: 34px; height: 28px; flex: none; display: flex; align-items: center; justify-content: center; }
.ic { width: 20px; height: 20px; flex: none; }
.cv { width: 18px; flex: none; display: flex; justify-content: center; }
.chev { width: 10px; height: 6px; }
.sep { width: 2px; height: 26px; background: #ccc; margin-right: 2px; flex: none; }
.sep.first { margin: 0 0 0 2px; }
.sep.tight { margin: 0; }
.sketch { width: 88px; flex: none; display: flex; align-items: center; gap: 5px; padding-left: 8px; font-size: 14px; color: #444; }
.var { font: italic 700 15px "Liberation Serif", serif; color: #333; }
.search { margin-left: 11px; width: 160px; height: 32px; background: #eee; border-radius: 3px; display: flex; align-items: center; padding-left: 10px; font-size: 14px; color: #444; white-space: nowrap; }
.search span { width: 90px; }
kbd { font: 11px Roboto, "DejaVu Sans", sans-serif; color: #444; background: #eee; border: 1px solid #aaa; height: 18px; display: flex; align-items: center; justify-content: center; }
.k1 { width: 33px; border-radius: 2px 0 0 2px; white-space: nowrap; letter-spacing: -.2px; }
.k2 { width: 17px; border-left: 0; border-radius: 0 2px 2px 0; }

/* feature panel */
.workspace { flex: 1; min-height: 0; display: flex; }
.panel { width: 207px; flex: none; background: #fff; border: 1px solid #ccc; border-width: 1px 2px 1px 0; font-size: 14px; letter-spacing: -.35px; color: #555; }
.filter { display: flex; align-items: center; height: 30px; margin-top: 7px; }
.funnel { width: 20px; height: 20px; margin-left: 8px; flex: none; }
.f-input { margin-left: 11px; width: 158px; height: 30px; border: 1px solid #aaa; border-radius: 3px; font-size: 14px; font-style: italic; color: #777; display: flex; align-items: center; padding-left: 6px; white-space: nowrap; }
.f-head { height: 26px; margin-top: 4px; display: flex; align-items: center; padding-left: 4px; }
.f-count { color: #1f3350; font-weight: 500; width: 131px; }
.f-ic { width: 20px; height: 20px; margin-right: 10px; flex: none; }
.row { height: 26px; display: flex; align-items: center; white-space: nowrap; }
.arrow { width: 12px; height: 7px; margin: 0 7px 0 4px; flex: none; }
.arrow.right { transform: rotate(-90deg); }
.tree { position: relative; margin-left: 9px; border-left: 1px solid #ccc; width: 190px; }
.sub { padding-left: 15px; }
.ri { width: 16px; height: 16px; margin-right: 4px; flex: none; }
.small { width: 10px; height: 10px; margin: 0 7px 0 3px; }
.belt span { width: 84px; margin-right: 22px; }
.belt .ri { margin-left: 2px; margin-right: 5px; }
.info { width: 16px; height: 16px; flex: none; }
.rollback { height: 7px; margin: 10px 10px 0 5px; background: #aaa; }
.parts { margin-top: 304px; border-top: 1px solid #ddd; margin-right: 6px; }
.parts .sub { padding-left: 24px; }

/* viewport */
.viewport { flex: 1; min-width: 0; position: relative; overflow: hidden; background: #fff; }
.scene { position: absolute; inset: 0; width: 100%; height: 100%; }
.plane { fill: rgba(120, 160, 210, .058); stroke: #aac6e2; stroke-width: 1.500; stroke-linejoin: round; }
.pl-text { font: italic 500 20px Roboto, sans-serif; fill: #3f6fba; }
.edges path { fill: none; stroke: #222; stroke-width: 1; }
.pl-over { fill: none; stroke: #9fbfdc; stroke-width: 1.300; opacity: .8; }
.c-hub { fill: none; stroke: #111; stroke-width: 2.500; }
.nav { fill: #dde5ec; }
.cube { fill: #dde5ec; }
.cube-f { fill: #fff; }
.cube-t { font: 10px Roboto, sans-serif; fill: #555; }
.cube-i { font: italic 11px Roboto, sans-serif; fill: #444; }
.ax { font: 13px Roboto, sans-serif; }
.axy { fill: #0d9d1d; }
.axx { fill: #e85555; }
.axz { fill: #1010d8; }
.toggle { position: absolute; left: -2px; top: 393px; width: 33px; height: 35px; background: #fff; border: 1px solid #aaa; display: flex; align-items: center; justify-content: center; padding: 0; }
.t-ic { width: 19px; height: 19px; }
.side { position: absolute; right: 0; top: 345px; width: 32px; background: #fff; border: 1px solid #aaa; border-right: 0; display: flex; flex-direction: column; }
.s-cell { height: 33px; display: flex; align-items: center; justify-content: center; border-bottom: 1px solid #aaa; }
.s-cell:last-child { border-bottom: 0; }
.s-ic { width: 22px; height: 22px; }
.measure { position: absolute; right: 11px; bottom: 3px; display: flex; gap: 16px; }
.m-ic { width: 19px; height: 19px; }

/* document tabs */
.doc-tabs { height: 30px; flex: none; background: #d5d5d5; display: flex; gap: 2px; font-size: 15px; letter-spacing: -.45px; color: #666; }
.add { width: 38px; font-size: 28px; line-height: 28px; text-align: center; color: #555; font-weight: 300; padding-right: 2px; }
.tab { width: 200px; height: 27px; background: #e8e8e8; border-radius: 0 0 6px 6px; display: flex; align-items: center; padding-left: 11px; white-space: nowrap; }
.d-ic { width: 17px; height: 19px; margin-right: 4px; flex: none; }
.tab.active { background: #fff; color: #444; border-bottom: 3px solid #1450ad; padding-top: 3px; }
.d-info { width: 14px; height: 14px; margin-right: 5px; flex: none; }

/* taskbar */
.taskbar { height: 48px; flex: none; background: #1c1c1c; border-top: 1px solid #555; display: flex; align-items: center; padding: 0 0 2px 15px; color: #eee; }
.tk { width: 36px; height: 40px; margin-right: 8px; position: relative; display: flex; align-items: center; justify-content: center; border-radius: 4px; }
.tk-ic { width: 24px; height: 24px; }
.pip::after { content: ""; position: absolute; bottom: 0; left: 15px; width: 6px; height: 3px; border-radius: 2px; background: #888; }
.on { background: #2b2b2b; outline: 1px solid #333; }
.on::after { left: 10px; width: 16px; background: #47bdf5; }
.badge { position: absolute; top: 3px; right: 0; min-width: 14px; height: 14px; border-radius: 7px; background: #d8204f; color: #fff; font: 11px Roboto, sans-serif; text-align: center; line-height: 14px; }
.soft { background: #f2605c; }
.tray { margin-left: auto; display: flex; align-items: center; padding-right: 21px; }
.tr-up { width: 12px; height: 8px; }
.eng { font-size: 12px; margin-left: 19px; width: 23px; }
.tr-ic { width: 18px; height: 18px; margin-left: 5px; flex: none; }
.eng + .tr-ic { margin-left: 18px; }
.clock { margin-left: 15px; width: 58px; display: flex; flex-direction: column; align-items: flex-end; font-size: 12px; line-height: 16px; white-space: nowrap; }
.tr-bell { width: 14px; height: 17px; margin-left: 7px; flex: none; }
```
